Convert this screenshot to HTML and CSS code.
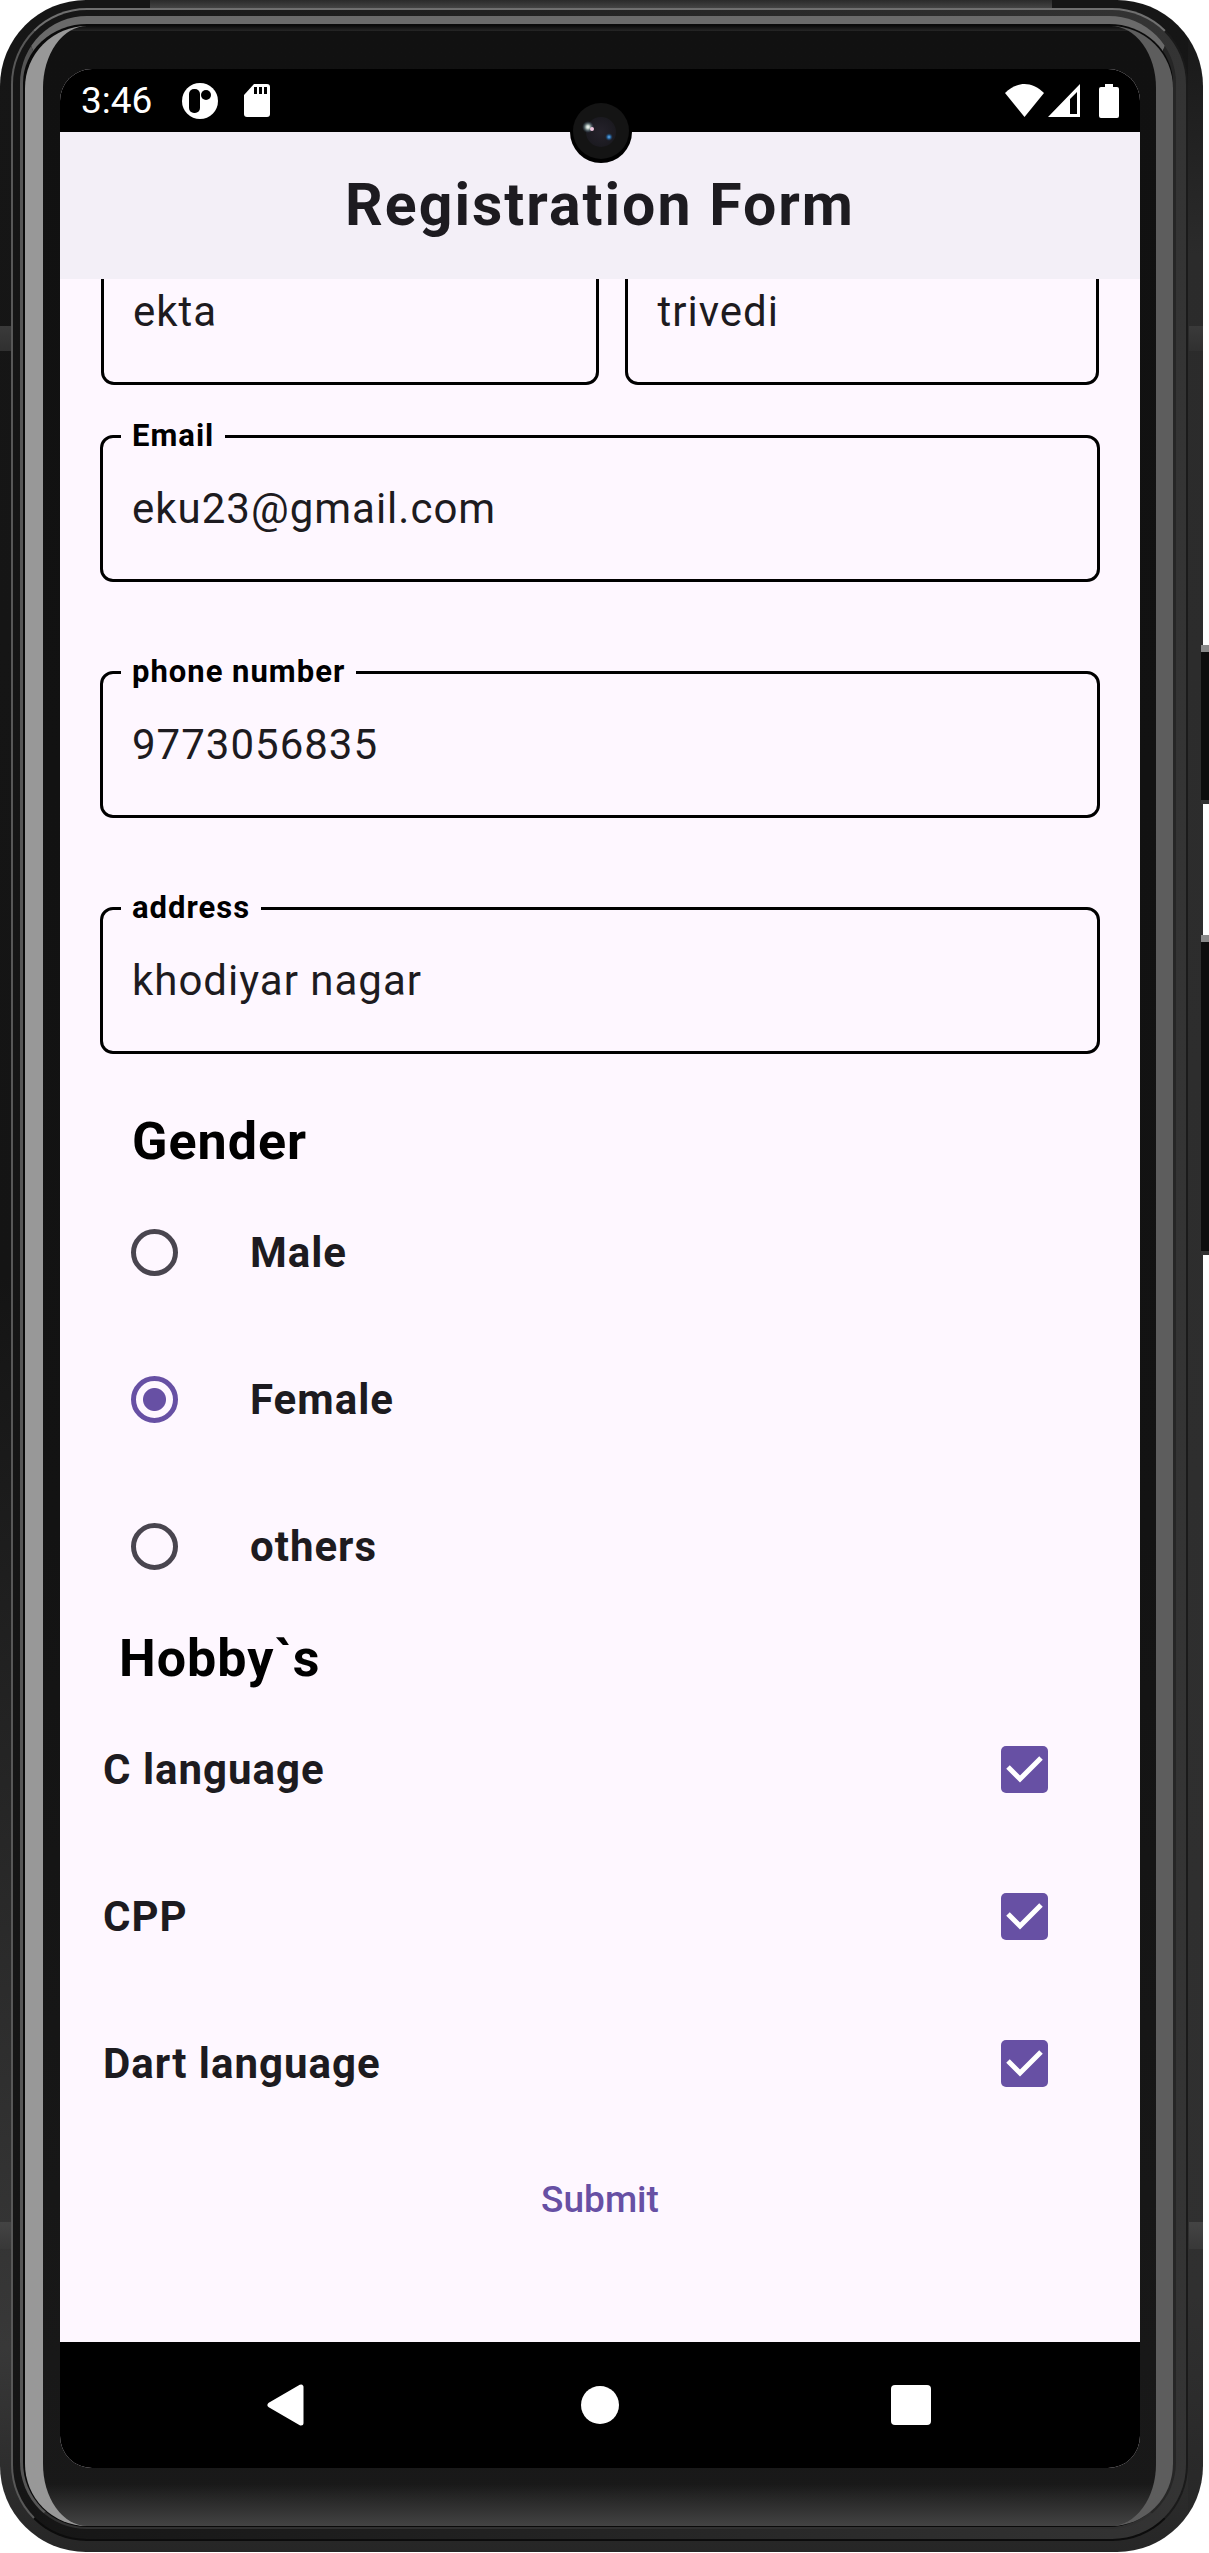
FILE: index.html
```html
<!DOCTYPE html>
<html lang="en">
<head>
<meta charset="utf-8">
<meta name="viewport" content="width=device-width, initial-scale=1">
<title>Registration Form</title>
<link rel="stylesheet" href="styles.css">
</head>
<body>
<div class="phone">
  <span class="side-key side-key-power"></span>
  <span class="side-key side-key-volume"></span>
  <div class="rail">
    <div class="rim">
      <div class="glass">
        <div class="screen">
          <svg class="camera" viewBox="0 0 62 62" aria-hidden="true">
            <defs>
              <radialGradient id="lens"><stop offset="0" stop-color="#25222b"/><stop offset="1" stop-color="#1b1a20"/></radialGradient>
              <radialGradient id="glow"><stop offset="0" stop-color="#fff"/><stop offset=".3" stop-color="#b9c9c0"/><stop offset="1" stop-color="#33506a" stop-opacity="0"/></radialGradient>
              <radialGradient id="blue"><stop offset="0" stop-color="#6ab4f0"/><stop offset=".4" stop-color="#2c6aa5"/><stop offset="1" stop-color="#1c3550" stop-opacity="0"/></radialGradient>
            </defs>
            <circle cx="31" cy="31" r="31" fill="#000"/>
            <circle cx="31" cy="30" r="28" fill="#141414"/>
            <circle cx="31" cy="31" r="15" fill="url(#lens)"/>
            <circle cx="18" cy="26" r="6" fill="url(#glow)"/>
            <circle cx="22" cy="28" r="2" fill="#f0c8e0"/>
            <circle cx="39" cy="36" r="4" fill="url(#blue)"/>
          </svg>
          <div class="status">
            <span class="clock">3:46</span>
            <svg class="status-app" viewBox="0 0 36 36" aria-hidden="true">
              <circle cx="18" cy="18" r="18" fill="#fff"/>
              <rect x="7" y="6" width="11" height="24" rx="5" fill="#000"/>
              <circle cx="24" cy="12" r="5" fill="#000"/>
            </svg>
            <svg class="status-sd" viewBox="0 0 26 33" aria-hidden="true">
              <path d="M10 0H23a3 3 0 0 1 3 3V30a3 3 0 0 1-3 3H3a3 3 0 0 1-3-3V11z" fill="#fff"/>
              <path d="M10 3h3v7h-3zM15 3h3v7h-3zM20 3h3v7h-3z" fill="#000"/>
            </svg>
            <svg class="status-wifi" viewBox="0 0 39 33" aria-hidden="true">
              <path d="M0 9C6 3 13 0 19.500 0S33 3 39 9L19.500 33z" fill="#fff"/>
            </svg>
            <svg class="status-signal" viewBox="0 0 32 33" aria-hidden="true">
              <path d="M32 0V33H0zM29 8l-7 7V30h7z" fill="#fff" fill-rule="evenodd"/>
            </svg>
            <svg class="status-battery" viewBox="0 0 20 34" aria-hidden="true">
              <path d="M6 0h8v3h4a2 2 0 0 1 2 2V32a2 2 0 0 1-2 2H2a2 2 0 0 1-2-2V5a2 2 0 0 1 2-2h4z" fill="#fff"/>
            </svg>
          </div>
          <header class="app-bar"><h1 class="title">Registration Form</h1></header>
          <main class="viewport">
            <form class="form">
              <div class="name-row">
                <input class="box" type="text" aria-label="First name" value="ekta">
                <input class="box" type="text" aria-label="Last name" value="trivedi">
              </div>
              <div class="fields">
                <div class="field">
                  <label class="field-label" for="email">Email</label>
                  <input class="box" id="email" type="email" value="eku23@gmail.com">
                </div>
                <div class="field">
                  <label class="field-label" for="phone">phone number</label>
                  <input class="box" id="phone" type="tel" value="9773056835">
                </div>
                <div class="field">
                  <label class="field-label" for="address">address</label>
                  <input class="box" id="address" type="text" value="khodiyar nagar">
                </div>
              </div>
              <h2 class="heading heading-gender">Gender</h2>
              <div class="choice choice-radio"><input class="radio" type="radio" name="gender" id="male"><label for="male">Male</label></div>
              <div class="choice choice-radio"><input class="radio" type="radio" name="gender" id="female" checked><label for="female">Female</label></div>
              <div class="choice choice-radio"><input class="radio" type="radio" name="gender" id="others"><label for="others">others</label></div>
              <h2 class="heading heading-hobby">Hobby`s</h2>
              <div class="choice choice-check"><label for="c">C language</label><span class="tick"><input class="check" type="checkbox" id="c" checked><svg class="tick-mark" viewBox="0 0 47 47" aria-hidden="true"><path d="M7 21L19 33L40 12"/></svg></span></div>
              <div class="choice choice-check"><label for="cpp">CPP</label><span class="tick"><input class="check" type="checkbox" id="cpp" checked><svg class="tick-mark" viewBox="0 0 47 47" aria-hidden="true"><path d="M7 21L19 33L40 12"/></svg></span></div>
              <div class="choice choice-check"><label for="dart">Dart language</label><span class="tick"><input class="check" type="checkbox" id="dart" checked><svg class="tick-mark" viewBox="0 0 47 47" aria-hidden="true"><path d="M7 21L19 33L40 12"/></svg></span></div>
              <button class="submit" type="button">Submit</button>
            </form>
          </main>
          <nav class="nav" aria-label="System navigation">
            <button class="nav-key" type="button" aria-label="Back"><svg class="nav-icon" viewBox="0 0 42 42" aria-hidden="true"><path d="M34 3V39L3 21z" fill="#fff" stroke="#fff" stroke-width="5" stroke-linejoin="round"/></svg></button>
            <button class="nav-key" type="button" aria-label="Home"><svg class="nav-icon" viewBox="0 0 42 42" aria-hidden="true"><circle cx="21" cy="21" r="19" fill="#fff"/></svg></button>
            <button class="nav-key" type="button" aria-label="Recent apps"><svg class="nav-icon" viewBox="0 0 42 42" aria-hidden="true"><rect x="0" y="1" width="40" height="40" rx="4" fill="#fff"/></svg></button>
          </nav>
        </div>
      </div>
    </div>
  </div>
</div>
</body>
</html>
```

FILE: styles.css
```css
* { box-sizing: border-box; }

body {
  margin: 0;
  padding-right: 6px;
  background: #fff;
  color: #1d1b20;
  font-family: Roboto, "Liberation Sans", sans-serif;
}

h1, h2 { margin: 0; }

svg { display: block; }

/* Device body: outer metal band with its antenna breaks */
.phone {
  position: relative;
  padding: 8px 15px 11px 11px;
  border-radius: 86px;
  background:
    linear-gradient(#3a3a3a, #303030) 0 326px / 12px 25px no-repeat,
    linear-gradient(#3a3a3a, #303030) 100% 326px / 14px 25px no-repeat,
    linear-gradient(#444, #383838) 0 2222px / 11px 27px no-repeat,
    linear-gradient(#444, #383838) 100% 2222px / 14px 27px no-repeat,
    linear-gradient(#2b2b2b, #444) 50% 0 / 75% 8px no-repeat,
    linear-gradient(#161616, #2b2b2b 10%, #303030 90%, #262626) 100% 0 / 15px 100% no-repeat,
    linear-gradient(#161616, #141414 50%, #383838 92%, #262626);
}

.side-key {
  position: absolute;
  right: -6px;
  width: 8px;
  border-top: 7px solid #8a8a8a;
  border-bottom: 4px solid #333;
  background: #0d0d0d;
}
.side-key-power { top: 645px; height: 159px; }
.side-key-volume { top: 935px; height: 320px; }

.rail {
  padding: 6px 10px 10px 7px;
  border: 2px solid;
  border-color: #707070 #1a1a1a #0c0c0c #585858;
  border-radius: 76px;
  background: linear-gradient(90deg, #151515, #242424 50%, #343434);
}

.rim {
  padding: 2px 0 1px 2px;
  border: solid;
  border-width: 8px 3px 2px 3px;
  border-color: #6a6a6a #262626 #303030 #555;
  border-radius: 67px;
  background: #0a0a0a;
}

.glass {
  position: relative;
  padding: 43px 16px 58px 17px;
  border-left: 18px solid #989898;
  border-right: 17px solid #5d5d5d;
  border-radius: 62px;
  background:
    linear-gradient(#0c0c0c, #262626) 50% 0 / 100% 5px no-repeat,
    linear-gradient(transparent, #434343) 50% 100% / 100% 42px no-repeat,
    linear-gradient(#111, #131313 60%, #191919);
  background-origin: border-box;
}

.screen {
  position: relative;
  overflow: hidden;
  border-radius: 32px;
  background: #fef7ff;
}

.camera {
  position: absolute;
  top: 32px;
  left: 50%;
  width: 62px;
  height: 62px;
  margin-left: -30px;
}

.status {
  display: flex;
  align-items: center;
  height: 63px;
  padding: 0 21px;
  background: #000;
  color: #fff;
}
.clock { font-size: 37px; line-height: 44px; }
.status-app { width: 36px; height: 36px; margin-left: 30px; }
.status-sd { width: 26px; height: 33px; margin-left: 26px; }
.status-wifi { width: 39px; height: 33px; margin-left: auto; }
.status-signal { width: 32px; height: 33px; margin-left: 4px; }
.status-battery { width: 20px; height: 34px; margin-left: 19px; }

.app-bar {
  display: flex;
  align-items: center;
  justify-content: center;
  height: 147px;
  padding-bottom: 2px;
  background: #f3eff7;
}
.title { font-size: 59px; line-height: 68px; font-weight: 700; letter-spacing: 2px; }

/* The form is scrolled a little way under the app bar */
.viewport { overflow: hidden; }
.form {
  display: flex;
  flex-direction: column;
  margin-top: -41px;
  padding: 0 40px 79px;
}

.name-row {
  display: grid;
  grid-template-columns: 20fr 19fr;
  gap: 26px;
  margin-bottom: 50px;
  padding: 0 1px;
}
.fields { display: flex; flex-direction: column; gap: 89px; }
.field { position: relative; }

.box {
  display: block;
  width: 100%;
  height: 147px;
  margin: 0;
  padding: 0 29px;
  border: 3px solid #000;
  border-radius: 13px;
  background: transparent;
  color: #1d1b20;
  font: 400 42px/50px Roboto, "Liberation Sans", sans-serif;
  letter-spacing: 1px;
}

.field-label {
  position: absolute;
  top: -17px;
  left: 21px;
  padding: 0 11px;
  background: #fef7ff;
  color: #000;
  font-size: 31px;
  line-height: 36px;
  font-weight: 700;
  letter-spacing: 1px;
}

.heading {
  color: #000;
  font-size: 52px;
  line-height: 62px;
  font-weight: 700;
  letter-spacing: 1px;
}
.heading-gender { margin: 57px 0 6px; padding-left: 32px; }
.heading-hobby { margin: 8px 0 6px; padding-left: 19px; }

.choice {
  display: flex;
  align-items: center;
  height: 147px;
  font-size: 42px;
  line-height: 50px;
  font-weight: 700;
  letter-spacing: 1px;
}
.choice-radio { gap: 72px; padding-left: 31px; }
.choice-check { justify-content: space-between; padding: 0 52px 0 3px; }

.radio {
  appearance: none;
  width: 47px;
  height: 47px;
  margin: 0;
  border: 5px solid #49454f;
  border-radius: 50%;
}
.radio:checked {
  border-color: #6750a4;
  background: radial-gradient(circle, #6750a4 11px, transparent 12px);
}

.tick { position: relative; }
.check {
  appearance: none;
  display: block;
  width: 47px;
  height: 47px;
  margin: 0;
  border-radius: 5px;
  background: #6750a4;
}
.tick-mark {
  position: absolute;
  inset: 0;
  fill: none;
  stroke: #fff;
  stroke-width: 5px;
  pointer-events: none;
}

.submit {
  align-self: center;
  height: 126px;
  padding: 0 32px;
  border: 0;
  background: transparent;
  color: #6750a4;
  font: 500 37px/44px Roboto, "Liberation Sans", sans-serif;
}

.nav { display: flex; padding: 0 72px; background: #000; }
.nav-key {
  display: flex;
  flex: 1;
  align-items: center;
  justify-content: center;
  height: 126px;
  padding: 0;
  border: 0;
  background: transparent;
}
.nav-icon { width: 42px; height: 42px; }
```
